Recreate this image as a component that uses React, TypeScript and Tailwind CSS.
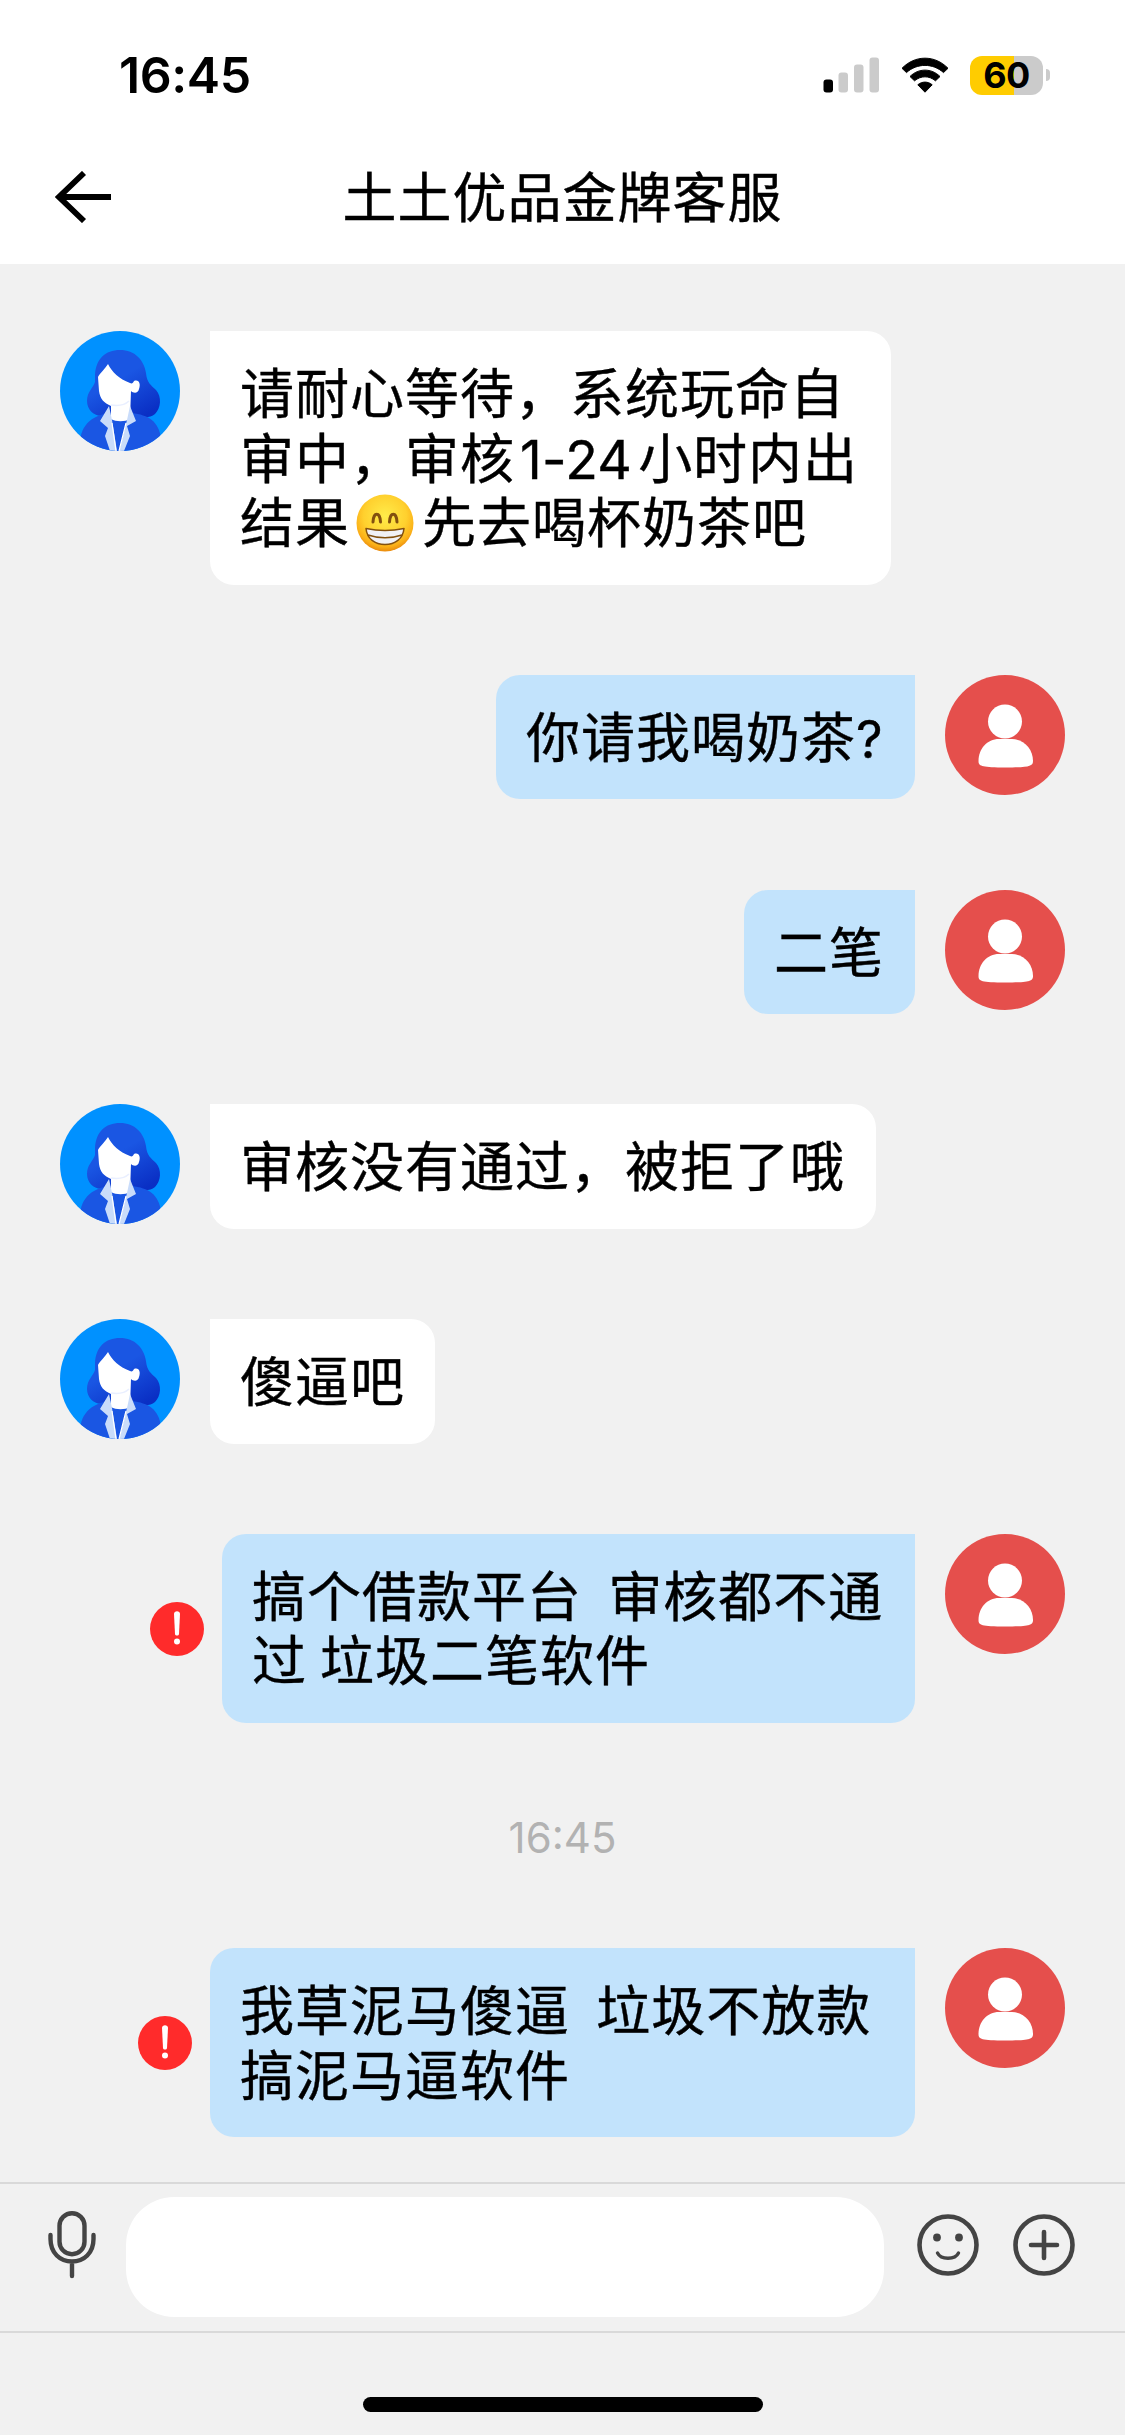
import type { ReactNode } from "react";

interface Message {
  id: number;
  from: "agent" | "user";
  lines: ReactNode[];
  failed?: boolean;
  time?: string;
  width: string;
}

const messages: Message[] = [
  {
    id: 1,
    from: "agent",
    width: "w-[681px]",
    lines: [
      "请耐心等待，系统玩命自",
      <>
        审中，审核
        <span className="mr-[6px] ml-[5px] font-[Inter] text-[53.5px] leading-none tracking-[0.3px]">
          1-24
        </span>
        小时内出
      </>,
      <>
        结果
        <GrinEmoji />
        先去喝杯奶茶吧
      </>,
    ],
  },
  {
    id: 2,
    from: "user",
    width: "w-[419px]",
    lines: [
      <>
        你请我喝奶茶
        <span className="font-[Inter] text-[52px] leading-none">?</span>
      </>,
    ],
  },
  { id: 3, from: "user", width: "w-[171px]", lines: ["二笔"] },
  { id: 4, from: "agent", width: "w-[666px]", lines: ["审核没有通过，被拒了哦"] },
  { id: 5, from: "agent", width: "w-[225px]", lines: ["傻逼吧"] },
  {
    id: 6,
    from: "user",
    width: "w-[693px]",
    failed: true,
    lines: ["搞个借款平台  审核都不通", "过 垃圾二笔软件"],
  },
  {
    id: 7,
    from: "user",
    width: "w-[705px]",
    failed: true,
    time: "16:45",
    lines: ["我草泥马傻逼  垃圾不放款", "搞泥马逼软件"],
  },
];

export default function App() {
  return (
    <div className="flex h-[2435px] w-[1125px] flex-col overflow-hidden bg-[#f1f1f1] font-['Noto_Sans_CJK_SC',sans-serif] text-black">
      <header className="h-[264px] shrink-0 bg-white">
        <StatusBar />
        <NavBar title="土土优品金牌客服" />
      </header>

      <main className="flex flex-1 flex-col gap-[90.25px] pt-[67px]">
        {messages.map((message) => (
          <MessageRow key={message.id} message={message} />
        ))}
      </main>

      <InputBar />

      <div className="flex h-[102px] shrink-0 justify-center pt-[64px]">
        <div className="h-[15px] w-[400px] rounded-full bg-black" />
      </div>
    </div>
  );
}

function StatusBar() {
  return (
    <div className="flex h-[150px] items-center justify-between pr-[75px] pl-[119px]">
      <span className="font-[Inter] text-[50px] leading-none font-semibold tracking-[-0.4px]">
        16:45
      </span>
      <div className="flex items-center">
        <svg width="57" height="36" viewBox="0 0 57 36">
          <rect x="0.5" y="22.5" width="9.5" height="13" rx="3" fill="#000" />
          <rect x="15.5" y="15.5" width="9.5" height="20" rx="3" fill="#cbcbcb" />
          <rect x="31" y="7.5" width="9.5" height="28" rx="3" fill="#cbcbcb" />
          <rect x="46.5" y="0.5" width="9.5" height="35" rx="3" fill="#cbcbcb" />
        </svg>
        <svg className="ml-[20px]" width="50" height="36" viewBox="0 0 50 36">
          <path
            d="M2 11.3C15 -2.2 35 -2.2 48 11.3L43.5 15.6C33 6 17 6 6.500 15.6Z"
            stroke="#000"
            strokeWidth="1"
            strokeLinejoin="round"
          />
          <path
            d="M10 19.5C18.5 11 31.5 11 40 19.5L35.500 23.8C29 18.500 21 18.500 14.500 23.8Z"
            stroke="#000"
            strokeWidth="1"
            strokeLinejoin="round"
          />
          <path d="M17.8 27.8C22 24.2 28 24.2 32.2 27.8L25 35.2Z" stroke="#000" strokeLinejoin="round" />
        </svg>
        <div className="ml-[20px] flex h-[39px] w-[73px] items-center justify-center rounded-[12px] bg-[linear-gradient(90deg,#ffcc00_60%,#cbcbcb_60%)]">
          <span className="font-[Inter] text-[36px] leading-none font-bold tracking-[-0.5px]">60</span>
        </div>
        <div className="ml-[3px] h-[12px] w-[4px] rounded-r-full bg-[#cbcbcb]" />
      </div>
    </div>
  );
}

function NavBar({ title }: { title: string }) {
  return (
    <div className="grid h-[94px] grid-cols-[170px_1fr_170px] items-center">
      <button type="button" aria-label="Back" className="pl-[55px]">
        <svg width="57" height="52" viewBox="0 0 57 52" fill="none" stroke="#000" strokeWidth="5.8">
          <path d="M29 2L4 26L29 50M3 26H56" />
        </svg>
      </button>
      <h1 className="pb-[4px] text-center text-[54px] leading-[90px] tracking-[1px] [-webkit-text-stroke:0.4px]">
        {title}
      </h1>
    </div>
  );
}

function MessageRow({ message }: { message: Message }) {
  const isUser = message.from === "user";

  return (
    <>
      {message.time && (
        <time className="block h-[44.75px] text-center font-[Inter] text-[42px] leading-[49px] text-[#b2b2b2]">
          {message.time}
        </time>
      )}
      <div className={`flex items-start px-[60px] ${isUser ? "justify-end" : ""}`}>
        {!isUser && <AgentAvatar />}
        {message.failed && <FailedMark />}
        <div
          className={`rounded-[24px] px-[30px] pt-[28px] pb-[32px] ${message.width} ${isUser ? "mr-[30px] rounded-tr-none bg-[#c2e3fc]" : "ml-[30px] rounded-tl-none bg-white"}`}
        >
          {message.lines.map((line, index) => (
            <p
              key={index}
              className="h-[64.5px] text-[54px] leading-[64.5px] tracking-[1px] whitespace-pre [-webkit-text-stroke:0.4px]"
            >
              {line}
            </p>
          ))}
        </div>
        {isUser && <UserAvatar />}
      </div>
    </>
  );
}

function AgentAvatar() {
  return (
    <svg className="shrink-0" width="120" height="120" viewBox="0 0 120 120">
      <defs>
        <clipPath id="agent-clip">
          <circle cx="60" cy="60" r="60" />
        </clipPath>
        <linearGradient id="agent-hair" x1="0.4" y1="0.45" x2="0.75" y2="1">
          <stop offset="0" stopColor="#1a56e3" />
          <stop offset="1" stopColor="#0a2fc4" />
        </linearGradient>
      </defs>
      <g clipPath="url(#agent-clip)">
        <rect width="120" height="120" fill="#0091ff" />
        <path
          d="M35 44C36 28 45 19 60 19C75 19 84 29 86 42C87 52 91 54 96 59C102 66 101 77 95 83C88 89 76 86 70 80L45 84C36 87 27 80 27 70C27 61 33 57 35 51Z"
          fill="url(#agent-hair)"
        />
        <path d="M20 120C18 99 27 86 48 82H72C88 84 99 90 101 108V120Z" fill="#1a56e3" />
        <path
          d="M48 33C52 41 59 48 70 52C72 53 73 52 74 50C79 48 81 53 79 58C78 63 73 62 71 60L70 88C65 91 56 91 51 88V75C44 72 40 68 39 60L38 46C40 42 45 38 48 33Z"
          fill="#fff"
        />
        <path d="M51 74C58 75 65 74 69 70" fill="none" stroke="#e9efff" strokeWidth="1.5" />
        <path d="M49 75L52 89L57 120H50L45 105L48 97L40 90Z" fill="#c9dcfa" />
        <path d="M70 75L67 89L59 120H64L70 105L67 95L76 90Z" fill="#c9dcfa" />
        <path d="M52 92L56 120M66 92L59 120" stroke="#fff" strokeWidth="1.2" />
      </g>
    </svg>
  );
}

function UserAvatar() {
  return (
    <svg className="shrink-0" width="120" height="120" viewBox="0 0 120 120">
      <circle cx="60" cy="60" r="60" fill="#e54f4c" />
      <circle cx="60" cy="46.5" r="17" fill="#fff" />
      <path
        d="M54 64H67C79 64 88 74 88 86C88 91 85 92.5 60.5 92.5C36 92.5 33.5 91 33.5 86C33.5 74 42 64 54 64Z"
        fill="#fff"
      />
    </svg>
  );
}

function FailedMark() {
  return (
    <svg className="mt-[68px] mr-[18px] shrink-0" width="54" height="54" viewBox="0 0 54 54">
      <circle cx="27" cy="27" r="27" fill="#ff2b2b" />
      <path d="M24 12C24 8.3 30 8.3 30 12L29 32C28.8 34 25.2 34 25 32Z" fill="#fff" />
      <circle cx="27" cy="39.5" r="3" fill="#fff" />
    </svg>
  );
}

function GrinEmoji() {
  return (
    <svg
      role="img"
      aria-label="😁"
      className="-mt-2 mr-[8px] ml-[6px] inline-block align-[-9px]"
      width="58"
      height="58"
      viewBox="0 0 58 58"
    >
      <defs>
        <radialGradient id="grin-face" cx="0.5" cy="0.38" r="0.63">
          <stop offset="0" stopColor="#ffec4a" />
          <stop offset="0.6" stopColor="#ffd02e" />
          <stop offset="0.85" stopColor="#fbb018" />
          <stop offset="1" stopColor="#e8860c" />
        </radialGradient>
      </defs>
      <circle cx="29" cy="29" r="28.5" fill="url(#grin-face)" />
      <path
        d="M17 28C17.5 17.5 24 17.5 24.5 28M33.5 28C34 17.5 40.5 17.5 41 28"
        fill="none"
        stroke="#83500f"
        strokeWidth="3"
        strokeLinecap="round"
      />
      <path
        d="M10 34.5C22 37 36 37 48 34.5C47 45 39 50.5 29 50.5C19 50.5 11 45 10 34.5Z"
        fill="#f1f1f6"
        stroke="#83500f"
        strokeWidth="1.5"
        strokeLinejoin="round"
      />
      <path d="M12 41C22 44.5 36 44.5 46 41" fill="none" stroke="#83500f" strokeWidth="1.5" />
    </svg>
  );
}

function InputBar() {
  return (
    <div className="flex h-[151px] shrink-0 items-start border-y-2 border-[#d9d9d9] pt-[13px]">
      <button type="button" aria-label="Voice" className="mt-[14px] ml-[48px]">
        <svg width="48" height="68" viewBox="0 0 48 68" fill="none" stroke="#444" strokeWidth="4.4">
          <rect x="11.5" y="2.2" width="25" height="41" rx="12.5" />
          <path d="M2.5 24V28C2.5 42 12 50.5 24 50.5S45.5 42 45.5 28V24M24 51V65" strokeLinecap="round" />
        </svg>
      </button>
      <input
        type="text"
        aria-label="Message"
        className="ml-[30px] h-[120px] w-[758px] rounded-[48px] bg-white px-[36px] text-[48px] outline-none"
      />
      <button type="button" aria-label="Emoji" className="mt-[17px] ml-[33px]">
        <svg width="62" height="62" viewBox="0 0 62 62" fill="none" stroke="#444" strokeWidth="4.6">
          <circle cx="31" cy="31" r="28.5" />
          <circle cx="20" cy="23.5" r="3.9" fill="#444" stroke="none" />
          <circle cx="42" cy="23.5" r="3.9" fill="#444" stroke="none" />
          <path d="M20.5 39C24 46 38 46 41.5 39" strokeWidth="3.4" strokeLinecap="round" />
        </svg>
      </button>
      <button type="button" aria-label="More" className="mt-[17px] ml-[34px]">
        <svg width="62" height="62" viewBox="0 0 62 62" fill="none" stroke="#444" strokeWidth="4.6">
          <circle cx="31" cy="31" r="28.5" />
          <path d="M31 18V44M18 31H44" strokeLinecap="round" />
        </svg>
      </button>
    </div>
  );
}
